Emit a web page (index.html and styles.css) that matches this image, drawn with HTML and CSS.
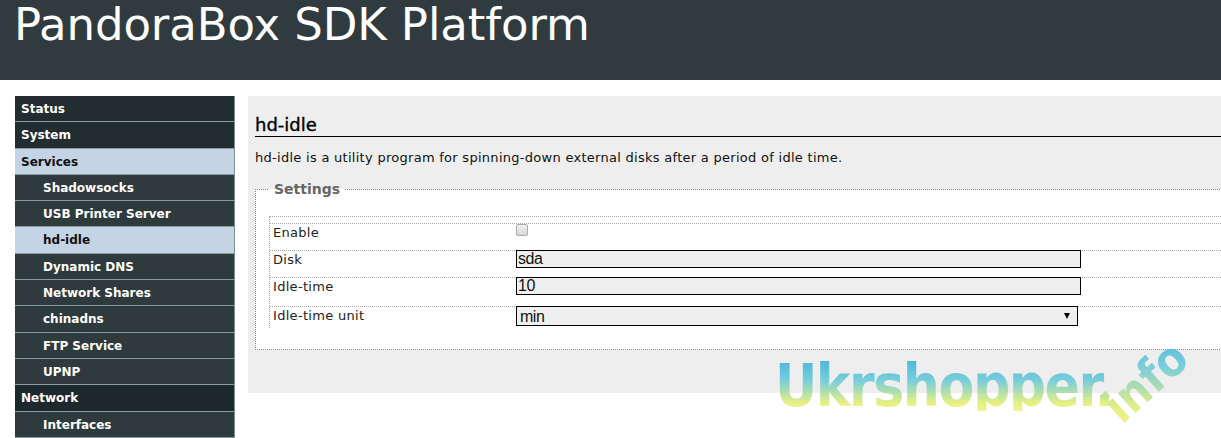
FILE: index.html
```html
<!DOCTYPE html>
<html>
<head>
<meta charset="utf-8">
<title>PandoraBox SDK Platform</title>
<link rel="stylesheet" href="styles.css">
</head>
<body>
<header class="topbar">
  <h1 class="brand">PandoraBox SDK Platform</h1>
</header>
<div class="layout">
  <nav class="sidebar">
    <a class="nav-item top">Status</a>
    <a class="nav-item top">System</a>
    <a class="nav-item top active">Services</a>
    <a class="nav-item sub">Shadowsocks</a>
    <a class="nav-item sub">USB Printer Server</a>
    <a class="nav-item sub active">hd-idle</a>
    <a class="nav-item sub">Dynamic DNS</a>
    <a class="nav-item sub">Network Shares</a>
    <a class="nav-item sub">chinadns</a>
    <a class="nav-item sub">FTP Service</a>
    <a class="nav-item sub">UPNP</a>
    <a class="nav-item top dark">Network</a>
    <a class="nav-item sub">Interfaces</a>
  </nav>
  <main class="content">
    <h2 class="page-title">hd-idle</h2>
    <p class="page-desc">hd-idle is a utility program for spinning-down external disks after a period of idle time.</p>
    <fieldset class="settings">
      <legend class="settings-legend">Settings</legend>
      <div class="form-table">
        <div class="form-row">
          <label class="form-label">Enable</label>
          <div class="form-field"><span class="checkbox"></span></div>
        </div>
        <div class="form-row">
          <label class="form-label">Disk</label>
          <div class="form-field"><input class="text-input" type="text" value="sda"></div>
        </div>
        <div class="form-row tall">
          <label class="form-label">Idle-time</label>
          <div class="form-field"><input class="text-input" type="text" value="10"></div>
        </div>
        <div class="form-row last">
          <label class="form-label">Idle-time unit</label>
          <div class="form-field">
            <div class="select-wrap">
              <select class="select-input"><option>min</option></select>
            </div>
          </div>
        </div>
      </div>
    </fieldset>
  </main>
</div>
<div class="watermark">
  <span class="wm-main">Ukrshopper.</span><span class="wm-info">info</span>
</div>
</body>
</html>
```

FILE: styles.css
```css
html, body {
  margin: 0;
  padding: 0;
}
body {
  background: #ffffff;
  font-family: "DejaVu Sans", Verdana, sans-serif;
  overflow: hidden;
  width: 1221px;
  height: 438px;
  position: relative;
}

.topbar {
  height: 80px;
  background: #2f3b3e;
  box-sizing: border-box;
  padding-left: 14px;
}
.brand {
  margin: 0;
  color: #ffffff;
  font-family: "DejaVu Sans", sans-serif;
  font-weight: normal;
  font-size: 45px;
  line-height: 50px;
  letter-spacing: -0.1px;
}

.layout {
  display: flex;
  align-items: flex-start;
  padding: 16px 0 0 15px;
  gap: 13px;
}

.sidebar {
  flex: none;
  width: 220px;
  display: flex;
  flex-direction: column;
  border-right: 1px solid #7c8f95;
  box-sizing: border-box;
}
.nav-item {
  display: block;
  height: 26.3px;
  box-sizing: border-box;
  border-bottom: 1px solid #8d9a9e;
  font-size: 12px;
  font-weight: bold;
  color: #ffffff;
  line-height: 26px;
  white-space: nowrap;
}
.nav-item.top {
  background: #222d30;
  padding-left: 6px;
}
.nav-item.sub {
  background: #2e3a3c;
  padding-left: 28px;
}
.nav-item.dark {
  background: #1d282b;
}
.nav-item.active {
  background: #c4d4e4;
  color: #111111;
}

.content {
  flex: none;
  width: 1000px;
  height: 297px;
  background: #eeeeee;
  box-sizing: border-box;
  padding: 18px 0 0 7px;
}
.page-title {
  margin: 0;
  font-size: 18px;
  font-weight: normal;
  color: #000;
  line-height: 22px;
  border-bottom: 1px solid #000;
  -webkit-text-stroke: 0.35px #000;
}
.page-desc {
  margin: 13px 0 0 0;
  font-size: 13px;
  letter-spacing: 0.28px;
  color: #111;
  line-height: 16px;
}

.settings {
  margin: 15px 0 0 0;
  border: 1px dotted #888888;
  background: #ffffff;
  padding: 19px 0 21px 13px;
}
.settings-legend {
  font-size: 14px;
  font-weight: bold;
  color: #666666;
  padding: 0 5px;
  margin-left: 0;
}

.form-table {
  border-top: 1px dotted #aaaaaa;
  border-left: 1px dotted #aaaaaa;
  padding-top: 6px;
}
.form-row {
  display: flex;
  border-top: 1px dotted #aaaaaa;
  height: 27px;
  box-sizing: border-box;
}
.form-row.tall {
  height: 29px;
}
.form-row.last {
  height: 22px;
}
.form-label {
  flex: none;
  width: 246px;
  box-sizing: border-box;
  padding: 1px 0 0 3px;
  font-size: 13px;
  letter-spacing: 0.3px;
  color: #222;
  line-height: 15px;
}
.form-field {
  flex: none;
  margin-top: -1px;
}
.checkbox {
  display: block;
  width: 10px;
  height: 10px;
  margin-top: 1px;
  border: 1px solid #aaaaaa;
  border-radius: 2px;
  background: linear-gradient(#f0f0f0, #d8d8d8);
}
.text-input {
  display: block;
  width: 565px;
  height: 18px;
  box-sizing: border-box;
  border: 1px solid #000;
  background: #efefef;
  font-family: "Liberation Sans", Arial, sans-serif;
  font-size: 16px;
  color: #111;
  padding: 0 1px;
  margin: 0;
  letter-spacing: -0.5px;
}
.select-wrap {
  position: relative;
  width: 562px;
}
.select-input {
  display: block;
  width: 562px;
  height: 20px;
  box-sizing: border-box;
  border: 1px solid #000;
  border-radius: 0;
  background: #efefef;
  font-family: "Liberation Sans", Arial, sans-serif;
  font-size: 16px;
  color: #111;
  padding: 0 3px;
  margin: 0;
  -webkit-appearance: none;
  appearance: none;
  letter-spacing: -0.5px;
}
.select-wrap::after {
  content: "";
  position: absolute;
  right: 8px;
  top: 7px;
  border-left: 3px solid transparent;
  border-right: 3px solid transparent;
  border-top: 6px solid #000;
}

.watermark {
  position: absolute;
  left: 775px;
  top: 345px;
  width: 446px;
  height: 93px;
  pointer-events: none;
}
.wm-main, .wm-info {
  position: absolute;
  font-family: "DejaVu Sans Condensed", "DejaVu Sans", sans-serif;
  font-weight: bold;
  -webkit-background-clip: text;
  background-clip: text;
  color: transparent;
  opacity: 0.9;
  white-space: nowrap;
}
.wm-main {
  left: 0;
  top: 16px;
  font-size: 58px;
  line-height: 50px;
  letter-spacing: -1.5px;
  background-image: linear-gradient(180deg, #3cb3dc 0%, #6fcbd8 40%, #e6ef72 85%, #f0f090 100%);
}
.wm-info {
  left: 350px;
  top: 40px;
  font-size: 48px;
  line-height: 44px;
  transform: rotate(-42deg);
  transform-origin: left bottom;
  background-image: linear-gradient(222deg, #3cb3dc 0%, #6fcbd8 35%, #e6ef72 80%, #f0f090 100%);
}
```
